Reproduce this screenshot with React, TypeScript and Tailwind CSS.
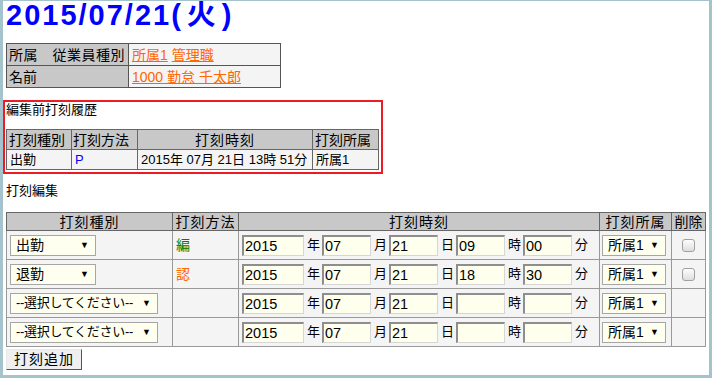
const font = "font-['Liberation_Sans','Noto_Sans_CJK_JP',sans-serif]";

type Row = {
  type: string;
  selW: string;
  selText: string;
  method: string;
  methodColor: string;
  hour: string;
  min: string;
  del: boolean;
};

const rows: Row[] = [
  { type: '出勤', selW: 'w-[86px]', selText: 'text-[14px]', method: '編', methodColor: 'text-[#008000]', hour: '09', min: '00', del: true },
  { type: '退勤', selW: 'w-[86px]', selText: 'text-[14px]', method: '認', methodColor: 'text-[#ff6600]', hour: '18', min: '30', del: true },
  { type: '--選択してください--', selW: 'w-[148px]', selText: 'text-[13px] tracking-[-0.3px]', method: '', methodColor: '', hour: '', min: '', del: false },
  { type: '--選択してください--', selW: 'w-[148px]', selText: 'text-[13px] tracking-[-0.3px]', method: '', methodColor: '', hour: '', min: '', del: false },
]

function Select({ label, width, text = 'text-[14px]' }: { label: string; width: string; text?: string }) {
  return (
    <div className={`flex h-[21px] items-center justify-between whitespace-nowrap border border-[#a6a6a6] bg-[#fffff0] pl-[5px] pr-[6px] leading-[18px] ${width}`}>
      <span className={text}>{label}</span>
      <span className="text-[9px] leading-none">▼</span>
    </div>
  )
}

function Field({ value, width }: { value: string; width: string }) {
  return (
    <input
      readOnly
      value={value}
      className={`h-[21px] border-t-2 border-l-2 border-r border-b border-t-[#8e8e8e] border-l-[#8e8e8e] border-r-[#d6d6d6] border-b-[#d6d6d6] bg-[#ffffee] pl-[1px] text-[14.5px] leading-[18px] text-black outline-none ${width}`}
    />
  )
}

function Label({ text }: { text: string }) {
  return <span className="w-[18px] pl-[3px] text-[13px] leading-[18px]">{text}</span>
}

export default function App() {
  return (
    <div className={`h-[378px] w-[712px] overflow-hidden border-t border-r-[3px] border-b-[3px] border-l-[3px] border-[#a4c3cc] bg-white pl-[3px] text-black ${font}`}>
      <h1 className="whitespace-nowrap text-[29px] font-bold leading-[28px] tracking-[2px] text-[#0000ff]">
        2015/07/21(<span className="mx-[4px]">火</span>)
      </h1>

      <table className="mt-[14px] w-[275px] border-collapse text-[14px]">
        <tbody>
          <tr className="h-[22px]">
            <td className="w-[122px] border border-[#555] bg-[#c8c8c8] pl-[2px] leading-[18px] tracking-[0.5px]">所属　従業員種別</td>
            <td className="border border-[#555] bg-[#f4f4f4] pl-[3px] leading-[18px]">
              <a className="text-[#ff6600] underline">所属1</a> <a className="text-[#ff6600] underline">管理職</a>
            </td>
          </tr>
          <tr className="h-[22px]">
            <td className="border border-[#555] bg-[#c8c8c8] pl-[2px] leading-[18px]">名前</td>
            <td className="border border-[#555] bg-[#f4f4f4] pl-[3px] leading-[18px]">
              <a className="text-[#ff6600] underline">1000 勤怠 千太郎</a>
            </td>
          </tr>
        </tbody>
      </table>

      <section className="-ml-[3px] mt-[12px] h-[74px] w-[380px] border-2 border-[#ed1c24] pl-[1px]">
        <p className="text-[13px] leading-[16px]">編集前打刻履歴</p>
        <table className="mt-[11px] w-[373px] border-collapse text-[14px]">
          <thead>
            <tr className="h-[20px] bg-[#c8c8c8]">
              <th className="w-[65px] border border-[#666] pl-[2px] text-left font-normal leading-[18px]">打刻種別</th>
              <th className="w-[66px] border border-[#666] pl-[1px] text-left font-normal leading-[18px]">打刻方法</th>
              <th className="border border-[#666] font-normal leading-[18px] tracking-[1px]">打刻時刻</th>
              <th className="w-[66px] border border-[#666] pl-[2px] text-left font-normal leading-[18px]">打刻所属</th>
            </tr>
          </thead>
          <tbody>
            <tr className="h-[20px] bg-[#f4f4f4] text-[13px]">
              <td className="border border-[#666] pl-[3px] leading-[18px]">出勤</td>
              <td className="border border-[#666] pl-[3px] leading-[18px] text-[#0000ff]">P</td>
              <td className="border border-[#666] pl-[3px] leading-[18px]">2015年 07月 21日 13時 51分</td>
              <td className="border border-[#666] pl-[3px] leading-[18px]">所属1</td>
            </tr>
          </tbody>
        </table>
      </section>

      <p className="mt-[9px] text-[13px] leading-[16px]">打刻編集</p>

      <table className="mt-[13px] w-[700px] border-collapse text-[14px]">
        <thead>
          <tr className="h-[18px] bg-[#c8c8c8]">
            <th className="w-[166px] border border-[#666] font-normal leading-[16px] tracking-[1px]">打刻種別</th>
            <th className="w-[66px] border border-[#666] font-normal leading-[16px] tracking-[1px]">打刻方法</th>
            <th className="border border-[#666] font-normal leading-[16px] tracking-[1px]">打刻時刻</th>
            <th className="w-[72px] border border-[#666] font-normal leading-[16px] tracking-[1px]">打刻所属</th>
            <th className="w-[34px] border border-[#666] font-normal leading-[16px]">削除</th>
          </tr>
        </thead>
        <tbody>
          {rows.map((row, i) => (
            <tr key={i} className="h-[29px] bg-[#f4f4f4]">
              <td className="border border-[#999] pl-[3px]">
                <Select label={row.type} width={row.selW} text={row.selText} />
              </td>
              <td className={`border border-[#999] pl-[3px] text-[14px] ${row.methodColor}`}>{row.method}</td>
              <td className="border border-[#999] pl-[3px]">
                <div className="flex items-center">
                  <Field value="2015" width="w-[62px]" />
                  <Label text="年" />
                  <Field value="07" width="w-[49px]" />
                  <Label text="月" />
                  <Field value="21" width="w-[49px]" />
                  <Label text="日" />
                  <Field value={row.hour} width="w-[49px]" />
                  <Label text="時" />
                  <Field value={row.min} width="w-[49px]" />
                  <Label text="分" />
                </div>
              </td>
              <td className="border border-[#999] pl-[2px]">
                <Select label="所属1" width="w-[64px]" />
              </td>
              <td className="border border-[#999]">
                {row.del && (
                  <div className="flex justify-center">
                    <span className="block h-[13px] w-[13px] rounded-[3px] border border-[#a0a0a0] bg-gradient-to-b from-[#fdfdfd] to-[#dedede]" />
                  </div>
                )}
              </td>
            </tr>
          ))}
        </tbody>
      </table>

      <button className="mt-[1px] h-[21px] w-[76px] border border-t-[#e8e8e8] border-l-[#e8e8e8] border-r-[#555] border-b-[#555] bg-[#efefef] text-[14px] leading-[18px] tracking-[1px]">
        打刻追加
      </button>
    </div>
  )
}
